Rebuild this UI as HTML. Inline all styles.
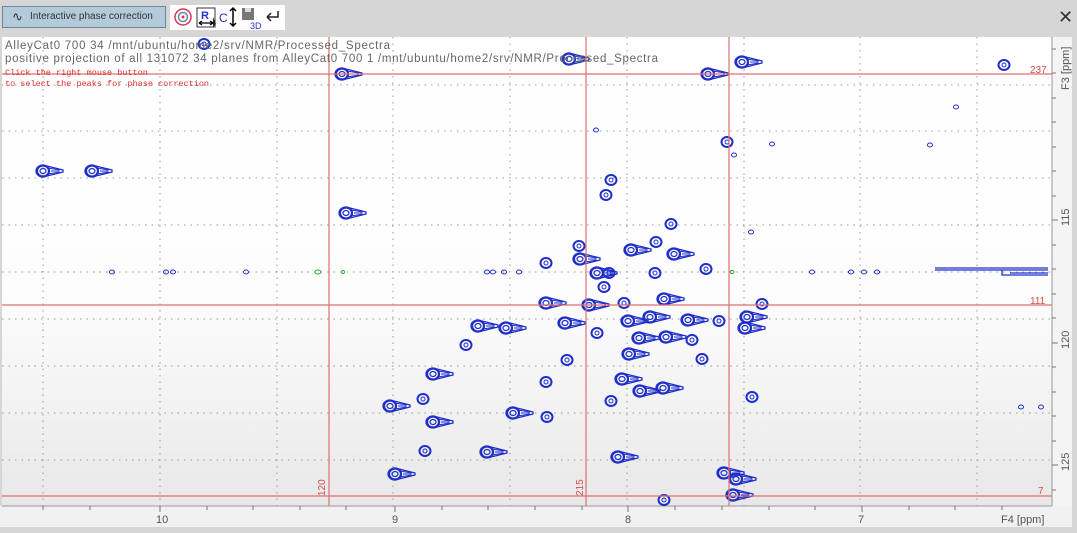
<!DOCTYPE html>
<html><head><meta charset="utf-8"><style>
html,body{margin:0;padding:0;width:1077px;height:533px;overflow:hidden;background:#d6d6d6;font-family:"Liberation Sans","DejaVu Sans",sans-serif}
.tb{position:absolute;left:0;top:0;width:1077px;height:34px;background:#d6d6d6}
.btn{position:absolute;left:2px;top:6px;width:164px;height:22px;background:#b3cadb;border:1px solid #6f8799;font-size:10px;color:#333;line-height:20px;box-sizing:border-box;white-space:nowrap}
.tools{position:absolute;left:170px;top:5px;width:115px;height:25px;background:#fff}
svg{position:absolute;left:0;top:0}
</style></head><body>
<div class="tb">
<div class="btn"><span style="position:absolute;left:9px;top:0;font-size:13px">∿</span><span style="position:absolute;left:27px">Interactive phase correction</span></div>
<div class="tools"></div>
<div style="position:absolute;left:1058px;top:7px;font-size:18px;color:#333">✕</div>
</div>
<svg width="1077" height="533" viewBox="0 0 1077 533">
<defs>
<linearGradient id="bg" x1="0" y1="0" x2="0" y2="1">
<stop offset="0" stop-color="#ffffff"/><stop offset="0.55" stop-color="#fdfdfd"/><stop offset="1" stop-color="#e8e8e8"/></linearGradient>
<g id="pk" fill="none" stroke="#1f2fc8">
<path d="M-7,0 a7,6 0 0 1 7,-6 l20,5 l0,2 l-20,5 a7,6 0 0 1 -7,-6z" stroke-width="1.3"/>
<ellipse cx="0" cy="0" rx="6" ry="5.5" stroke-width="2.2"/>
<ellipse cx="0" cy="0" rx="3" ry="2.5" stroke-width="1.2"/>
<path d="M5,-3 l12,2 M5,3 l12,-2 M8,0 h8" stroke-width="1"/>
</g>
<g id="sm" fill="none" stroke="#1f2fc8">
<ellipse cx="0" cy="0" rx="5.5" ry="5" stroke-width="2"/>
<ellipse cx="0" cy="0" rx="2" ry="2" stroke-width="1"/>
</g>
<g id="dt" fill="none" stroke="#1f2fc8"><ellipse cx="0" cy="0" rx="2.5" ry="2" stroke-width="1"/></g>
</defs>
<g transform="translate(170,5)">
<circle cx="13" cy="12" r="8" fill="none" stroke="#d35" stroke-width="1.5"/><circle cx="13" cy="12" r="4.5" fill="none" stroke="#68a" stroke-width="1.5"/><circle cx="13" cy="12" r="1.5" fill="#d35"/>
<rect x="27" y="3" width="18" height="19" fill="none" stroke="#333" stroke-width="1"/>
<text x="31" y="14" font-size="11" font-weight="bold" fill="#2233cc" font-family="Liberation Sans">R</text>
<path d="M29,18 h14 M29,18 l3,-2 M29,18 l3,2 M43,18 l-3,-2 M43,18 l-3,2" stroke="#000" stroke-width="1.2"/>
<path d="M43,12 l0,10 l3,-3 z" fill="#222"/>
<text x="49" y="17" font-size="12" fill="#2233cc" font-family="Liberation Sans">C</text>
<path d="M63,3 v18 M60,6 l3,-3 l3,3 M60,18 l3,3 l3,-3" stroke="#000" stroke-width="1.5" fill="none"/>
<rect x="72" y="3" width="12" height="12" fill="#777"/><rect x="75" y="3" width="6" height="4" fill="#ddd"/>
<text x="80" y="24" font-size="9" fill="#2233cc" font-family="Liberation Sans">3D</text>
<path d="M97,12 h11 v-6 M97,12 l4,-4 M97,12 l4,4" stroke="#222" stroke-width="1.5" fill="none"/>
</g>
<rect x="0" y="36" width="1077" height="497" fill="#d6d6d6"/>
<rect x="2" y="37" width="1050" height="469" fill="url(#bg)"/>
<rect x="1052" y="37" width="20" height="490" fill="#f4f4f4"/>
<rect x="0" y="506" width="1072" height="21" fill="#f1f1f1"/>
<line x1="2" y1="506" x2="1052" y2="506" stroke="#999"/>
<line x1="1052" y1="37" x2="1052" y2="506" stroke="#999"/>
<g stroke="#999" stroke-width="1" stroke-dasharray="1.5,5">
<line x1="43" y1="37" x2="43" y2="506"/><line x1="160" y1="37" x2="160" y2="506"/><line x1="277" y1="37" x2="277" y2="506"/><line x1="393" y1="37" x2="393" y2="506"/><line x1="510" y1="37" x2="510" y2="506"/><line x1="627" y1="37" x2="627" y2="506"/><line x1="744" y1="37" x2="744" y2="506"/><line x1="860" y1="37" x2="860" y2="506"/><line x1="977" y1="37" x2="977" y2="506"/>
<line x1="2" y1="85" x2="1052" y2="85"/><line x1="2" y1="131" x2="1052" y2="131"/><line x1="2" y1="178" x2="1052" y2="178"/><line x1="2" y1="225" x2="1052" y2="225"/><line x1="2" y1="272" x2="1052" y2="272"/><line x1="2" y1="319" x2="1052" y2="319"/><line x1="2" y1="366" x2="1052" y2="366"/><line x1="2" y1="413" x2="1052" y2="413"/><line x1="2" y1="460" x2="1052" y2="460"/>
</g>
<g stroke="#777">
<line x1="43" y1="506" x2="43" y2="510"/><line x1="90" y1="506" x2="90" y2="510"/><line x1="160" y1="506" x2="160" y2="512"/><line x1="207" y1="506" x2="207" y2="510"/><line x1="253" y1="506" x2="253" y2="510"/><line x1="300" y1="506" x2="300" y2="510"/><line x1="346" y1="506" x2="346" y2="510"/><line x1="395" y1="506" x2="395" y2="512"/><line x1="442" y1="506" x2="442" y2="510"/><line x1="488" y1="506" x2="488" y2="510"/><line x1="535" y1="506" x2="535" y2="510"/><line x1="582" y1="506" x2="582" y2="510"/><line x1="628" y1="506" x2="628" y2="512"/><line x1="675" y1="506" x2="675" y2="510"/><line x1="722" y1="506" x2="722" y2="510"/><line x1="769" y1="506" x2="769" y2="510"/><line x1="815" y1="506" x2="815" y2="510"/><line x1="862" y1="506" x2="862" y2="512"/><line x1="909" y1="506" x2="909" y2="510"/><line x1="955" y1="506" x2="955" y2="510"/><line x1="1002" y1="506" x2="1002" y2="510"/>
<line x1="1052" y1="49" x2="1056" y2="49"/><line x1="1052" y1="73" x2="1056" y2="73"/><line x1="1052" y1="98" x2="1056" y2="98"/><line x1="1052" y1="122" x2="1056" y2="122"/><line x1="1052" y1="147" x2="1056" y2="147"/><line x1="1052" y1="171" x2="1056" y2="171"/><line x1="1052" y1="196" x2="1056" y2="196"/><line x1="1052" y1="220" x2="1058" y2="220"/><line x1="1052" y1="245" x2="1056" y2="245"/><line x1="1052" y1="269" x2="1056" y2="269"/><line x1="1052" y1="294" x2="1056" y2="294"/><line x1="1052" y1="318" x2="1056" y2="318"/><line x1="1052" y1="343" x2="1058" y2="343"/><line x1="1052" y1="367" x2="1056" y2="367"/><line x1="1052" y1="392" x2="1056" y2="392"/><line x1="1052" y1="416" x2="1056" y2="416"/><line x1="1052" y1="441" x2="1056" y2="441"/><line x1="1052" y1="465" x2="1058" y2="465"/><line x1="1052" y1="490" x2="1056" y2="490"/>
</g>
<g font-family="Liberation Sans" font-size="11" fill="#555">
<text x="156" y="523">10</text><text x="392" y="523">9</text><text x="625" y="523">8</text><text x="858" y="523">7</text><text x="1001" y="523">F4 [ppm]</text>
<text transform="translate(1069,226) rotate(-90)">115</text>
<text transform="translate(1069,349) rotate(-90)">120</text>
<text transform="translate(1069,471) rotate(-90)">125</text>
<text transform="translate(1069,90) rotate(-90)">F3 [ppm]</text>
</g>
<g stroke="#1f2fc8" fill="none">
<path d="M935,268 H1048 M935,270 H1048 M1002,270 v5 h46 M1010,273 h38" stroke-width="1.3"/>
</g>
<g>
<use href="#dt" x="112" y="272"/><use href="#dt" x="166" y="272"/><use href="#dt" x="173" y="272"/><use href="#dt" x="246" y="272"/><use href="#dt" x="487" y="272"/><use href="#dt" x="493" y="272"/><use href="#dt" x="504" y="272"/><use href="#dt" x="519" y="272"/><use href="#dt" x="851" y="272"/><use href="#dt" x="864" y="272"/><use href="#dt" x="877" y="272"/><use href="#dt" x="812" y="272"/><use href="#dt" x="772" y="144"/><use href="#dt" x="930" y="145"/><use href="#dt" x="956" y="107"/><use href="#dt" x="596" y="130"/>
</g>
<g stroke="#3a3" fill="none"><ellipse cx="318" cy="272" rx="3" ry="2"/><ellipse cx="343" cy="272" rx="1.5" ry="1.5"/><ellipse cx="732" cy="272" rx="2" ry="1.5"/></g>
<g>
<use href="#pk" x="342" y="74"/><use href="#pk" x="346" y="213"/><use href="#pk" x="569" y="59"/><use href="#pk" x="708" y="74"/><use href="#pk" x="742" y="62"/>
<use href="#pk" x="43" y="171"/><use href="#pk" x="92" y="171"/><use href="#sm" x="204" y="44"/><use href="#sm" x="1004" y="65"/>
<use href="#sm" x="727" y="142"/><use href="#sm" x="611" y="180"/><use href="#sm" x="606" y="195"/><use href="#sm" x="671" y="224"/><use href="#sm" x="579" y="246"/><use href="#pk" x="631" y="250"/><use href="#pk" x="674" y="254"/><use href="#pk" x="580" y="259"/><use href="#sm" x="546" y="263"/><use href="#pk" x="597" y="273"/><use href="#sm" x="609" y="273"/><use href="#sm" x="655" y="273"/><use href="#sm" x="706" y="269"/><use href="#sm" x="604" y="287"/><use href="#pk" x="546" y="303"/><use href="#pk" x="589" y="305"/><use href="#sm" x="624" y="303"/><use href="#pk" x="664" y="299"/><use href="#sm" x="762" y="304"/>
<use href="#pk" x="478" y="326"/><use href="#pk" x="506" y="328"/><use href="#pk" x="565" y="323"/><use href="#pk" x="628" y="321"/><use href="#pk" x="650" y="317"/><use href="#pk" x="688" y="320"/><use href="#sm" x="719" y="321"/><use href="#pk" x="747" y="317"/><use href="#pk" x="745" y="328"/><use href="#sm" x="597" y="333"/><use href="#pk" x="639" y="338"/><use href="#pk" x="666" y="337"/><use href="#sm" x="692" y="340"/><use href="#sm" x="466" y="345"/><use href="#pk" x="629" y="354"/><use href="#sm" x="702" y="359"/><use href="#sm" x="567" y="360"/>
<use href="#pk" x="433" y="374"/><use href="#pk" x="622" y="379"/><use href="#pk" x="663" y="388"/><use href="#pk" x="640" y="391"/><use href="#sm" x="546" y="382"/><use href="#pk" x="390" y="406"/><use href="#sm" x="423" y="399"/><use href="#pk" x="513" y="413"/><use href="#sm" x="611" y="401"/><use href="#pk" x="433" y="422"/><use href="#sm" x="547" y="417"/><use href="#pk" x="487" y="452"/><use href="#sm" x="425" y="451"/><use href="#pk" x="618" y="457"/><use href="#pk" x="395" y="474"/><use href="#pk" x="724" y="473"/><use href="#pk" x="736" y="479"/><use href="#pk" x="733" y="495"/><use href="#sm" x="664" y="500"/><use href="#sm" x="752" y="397"/><use href="#dt" x="751" y="232"/><use href="#sm" x="656" y="242"/><use href="#dt" x="734" y="155"/><use href="#dt" x="1041" y="407"/><use href="#dt" x="1021" y="407"/>
</g>
<g stroke="#e07070" stroke-width="1.2">
<line x1="2" y1="74" x2="1052" y2="74"/><line x1="2" y1="305" x2="1052" y2="305"/><line x1="2" y1="496" x2="1052" y2="496"/>
<line x1="329" y1="37" x2="329" y2="506"/><line x1="586" y1="37" x2="586" y2="506"/><line x1="729" y1="37" x2="729" y2="506"/>
</g>
<g font-family="Liberation Sans" font-size="10" fill="#d05050">
<text x="1030" y="73">237</text><text x="1030" y="304">111</text><text x="1038" y="494">7</text>
<text transform="translate(325,496) rotate(-90)">120</text>
<text transform="translate(583,496) rotate(-90)">215</text>
</g>
<g font-family="Liberation Sans" font-size="11.5" fill="#666" xml:space="preserve">
<text x="5" y="49" textLength="385" lengthAdjust="spacing">AlleyCat0  700  34  /mnt/ubuntu/home2/srv/NMR/Processed_Spectra</text>
<text x="5" y="62" textLength="653" lengthAdjust="spacing">positive projection of all 131072 34 planes from AlleyCat0  700  1  /mnt/ubuntu/home2/srv/NMR/Processed_Spectra</text>
</g>
<g font-family="Liberation Mono" font-size="8.5" fill="#e03030">
<text x="5" y="75">Click the right mouse button</text>
<text x="5" y="86">to select the peaks for phase correction</text>
</g>
</svg>
</body></html>
